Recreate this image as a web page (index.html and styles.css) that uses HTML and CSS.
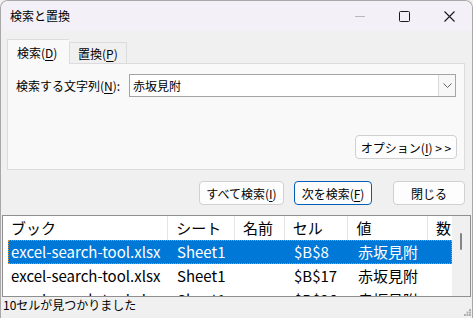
FILE: index.html
```html
<!DOCTYPE html>
<html lang="ja">
<head>
  <meta charset="UTF-8">
  <meta name="viewport" content="width=device-width, initial-scale=1.0">
  <title>検索と置換</title>
  <link rel="stylesheet" href="styles.css">
</head>
<body>
  <div class="window">
    <header class="titlebar">
      <span class="title">検索と置換</span>
      <div class="controls">
        <span class="ctl ctl-min">
          <svg width="10" height="10" viewBox="0 0 10 10"><path d="M0 5.5h10" stroke="#b8b8b8" stroke-width="1"/></svg>
        </span>
        <span class="ctl">
          <svg width="11" height="11" viewBox="0 0 11 11"><rect x="0.5" y="0.5" width="10" height="10" rx="1" fill="none" stroke="#1a1a1a" stroke-width="1"/></svg>
        </span>
        <span class="ctl">
          <svg width="11" height="11" viewBox="0 0 11 11"><path d="M0.5 0.5l10 10M10.5 0.5l-10 10" stroke="#1a1a1a" stroke-width="1.1"/></svg>
        </span>
      </div>
    </header>

    <div class="content">
      <div class="tabs">
        <div class="tab tab-active">検索(<u>D</u>)</div>
        <div class="tab">置換(<u>P</u>)</div>
      </div>
      <div class="panel">
        <div class="find-row">
          <label class="find-label">検索する文字列(<u>N</u>):</label>
          <div class="combo">
            <span class="combo-text">赤坂見附</span>
            <span class="combo-drop">
              <svg width="9" height="5" viewBox="0 0 9 5"><path d="M0.5 0.5l4 4 4-4" fill="none" stroke="#606060" stroke-width="1"/></svg>
            </span>
          </div>
        </div>
        <div class="options-row">
          <button class="btn btn-options">オプション(<u>I</u>) &gt; &gt;</button>
        </div>
      </div>

      <div class="actions">
        <button class="btn btn-all">すべて検索(<u>I</u>)</button>
        <button class="btn btn-next">次を検索(<u>F</u>)</button>
        <button class="btn btn-close">閉じる</button>
      </div>
    </div>

    <div class="list">
      <div class="list-body">
        <div class="list-head">
          <span class="col c1">ブック</span>
          <span class="col c2">シート</span>
          <span class="col c3">名前</span>
          <span class="col c4">セル</span>
          <span class="col c5">値</span>
          <span class="col c6">数</span>
        </div>
        <div class="row row-selected">
          <span class="cell c1">excel-search-tool.xlsx</span>
          <span class="cell c2">Sheet1</span>
          <span class="cell c3"></span>
          <span class="cell c4">$B$8</span>
          <span class="cell c5">赤坂見附</span>
        </div>
        <div class="row">
          <span class="cell c1">excel-search-tool.xlsx</span>
          <span class="cell c2">Sheet1</span>
          <span class="cell c3"></span>
          <span class="cell c4">$B$17</span>
          <span class="cell c5">赤坂見附</span>
        </div>
        <div class="row">
          <span class="cell c1">excel-search-tool.xlsx</span>
          <span class="cell c2">Sheet1</span>
          <span class="cell c3"></span>
          <span class="cell c4">$B$26</span>
          <span class="cell c5">赤坂見附</span>
        </div>
      </div>
      <div class="scrollbar">
        <span class="thumb"></span>
      </div>
    </div>

    <footer class="status">
      <span class="status-text">10セルが見つかりました</span>
      <svg class="grip" width="7" height="7" viewBox="0 0 7 7">
        <rect x="5" y="0" width="2" height="2" fill="#b0b0b0"/>
        <rect x="2.5" y="2.5" width="2" height="2" fill="#b0b0b0"/>
        <rect x="5" y="2.5" width="2" height="2" fill="#b0b0b0"/>
        <rect x="0" y="5" width="2" height="2" fill="#b0b0b0"/>
        <rect x="2.5" y="5" width="2" height="2" fill="#b0b0b0"/>
        <rect x="5" y="5" width="2" height="2" fill="#b0b0b0"/>
      </svg>
    </footer>
  </div>
</body>
</html>
```

FILE: styles.css
```css
body {
  margin: 0;
  padding: 0;
  font-family: "Noto Sans CJK JP", sans-serif;
  font-size: 12px;
  color: #000;
  background-color: #f0f0f0;
}

u {
  text-decoration-thickness: 1px;
  text-underline-offset: 2px;
}

.window {
  width: 473px;
  height: 318px;
  box-sizing: border-box;
  border: 1px solid #a8a8a8;
  border-bottom: none;
  border-radius: 8px 8px 0 0;
  overflow: hidden;
  display: flex;
  flex-direction: column;
  background-color: #f0f0f0;
}

.titlebar {
  height: 30px;
  flex-shrink: 0;
  display: flex;
  align-items: center;
  justify-content: space-between;
  padding-left: 9px;
  background-color: #f3f0f7;
}

.title {
  font-size: 12px;
  line-height: 1;
}

.controls {
  display: flex;
  height: 100%;
}

.ctl {
  width: 45px;
  display: flex;
  align-items: center;
  justify-content: center;
}

.content {
  flex-shrink: 0;
  padding: 8px 6px 0 6px;
}

.tabs {
  display: flex;
  align-items: flex-end;
  height: 24px;
}

.tab {
  height: 21px;
  box-sizing: border-box;
  padding: 0 8px;
  display: flex;
  align-items: center;
  border: 1px solid #dcdcdc;
  border-bottom: none;
  background-color: #f0f0f0;
}

.tab-active {
  height: 25px;
  margin-bottom: -1px;
  width: 62px;
  padding: 0 0 0 9px;
  background-color: #f9f9f9;
  border-right: none;
  position: relative;
  z-index: 1;
}

.panel {
  height: 107px;
  box-sizing: border-box;
  width: 458px;
  background-color: #f9f9f9;
  border: 1px solid #dcdcdc;
  padding: 10px 7px 0 8px;
  display: flex;
  flex-direction: column;
}

.find-row {
  display: flex;
  align-items: center;
}

.find-label {
  width: 113px;
}

.combo {
  width: 327px;
  height: 23px;
  box-sizing: border-box;
  border: 1px solid #a4a4a4;
  background-color: #fff;
  display: flex;
  align-items: center;
  justify-content: space-between;
  padding-left: 3px;
}

.combo-text {
  font-size: 12px;
}

.combo-drop {
  width: 17px;
  height: 21px;
  box-sizing: border-box;
  border-left: 1px solid #dadada;
  background-color: #f7f7f7;
  display: flex;
  align-items: center;
  justify-content: center;
}

.options-row {
  display: flex;
  justify-content: flex-end;
  margin-top: 38px;
}

.btn {
  font-family: inherit;
  font-size: 12px;
  color: #000;
  height: 24px;
  padding: 0;
  background-color: #fdfdfd;
  border: 1px solid #d0d0d0;
  border-radius: 4px;
}

.btn-options {
  width: 102px;
}

.actions {
  display: flex;
  justify-content: flex-end;
  padding-right: 1px;
  margin-top: 11px;
}

.btn-all {
  width: 85px;
}

.btn-next {
  width: 78px;
  margin-left: 10px;
  border-color: #005fb8;
}

.btn-close {
  width: 72px;
  margin-left: 21px;
}

.list {
  flex-shrink: 0;
  margin: 10px 0 0 1px;
  width: 469px;
  height: 82px;
  box-sizing: border-box;
  border: 1px solid #8f8f8f;
  background-color: #fff;
  display: flex;
  overflow: hidden;
}

.list-body {
  flex: 1;
  overflow: hidden;
  font-size: 15px;
}

.list-head {
  display: flex;
  height: 24px;
}

.col {
  box-sizing: border-box;
  padding-left: 8px;
  line-height: 24px;
  border-right: 1px solid #e5e5e5;
  white-space: nowrap;
  overflow: hidden;
}

.list-head .c1 { width: 166px; }
.list-head .c2 { width: 67px; }
.list-head .c3 { width: 50px; }
.list-head .c4 { width: 64px; }
.list-head .c5 { width: 80px; }
.list-head .c6 { width: 24px; border-right: none; }

.row {
  display: flex;
  height: 24px;
  margin-left: 5px;
  box-sizing: border-box;
}

.row-selected {
  background-color: #0078d7;
  color: #fff;
  outline: 1px dotted #e0902a;
  outline-offset: -1px;
}

.cell {
  box-sizing: border-box;
  padding-left: 3px;
  line-height: 24px;
  white-space: nowrap;
}

.row .c1 { width: 161px; }
.row .c2 { width: 67px; padding-left: 8px; }
.row .c3 { width: 50px; }
.row .c4 { width: 64px; padding-left: 8px; }
.row .c5 { width: 80px; padding-left: 8px; }

.scrollbar {
  width: 18px;
  background-color: #f0f0f0;
  position: relative;
}

.thumb {
  position: absolute;
  left: 8px;
  top: 17px;
  width: 2px;
  height: 17px;
  border-radius: 1px;
  background-color: #858585;
}

.status {
  flex: 1;
  display: flex;
  align-items: flex-start;
  justify-content: space-between;
  padding: 0 1px 0 2px;
}

.status-text {
  line-height: 16px;
}

.grip {
  align-self: flex-end;
  margin-bottom: 2px;
}
```
